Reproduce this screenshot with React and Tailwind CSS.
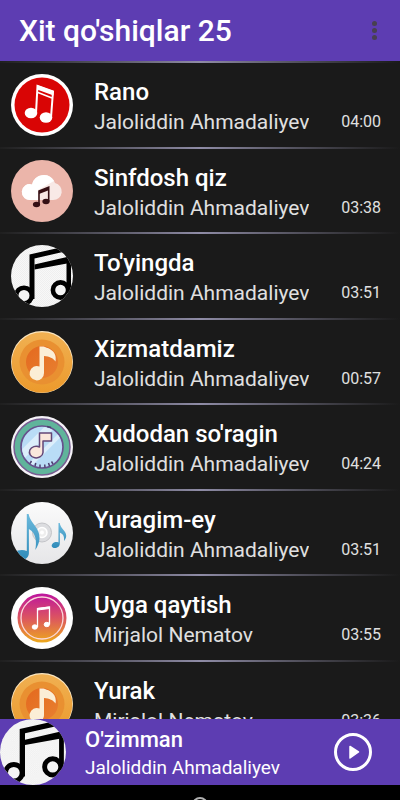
import React, { useState } from 'react';

const RedNote = () => (
    <svg viewBox="0 0 62 62" className="size-full">
        <circle cx="31" cy="31" r="31" fill="#fff" />
        <circle cx="31" cy="31" r="27.5" fill="#d90505" />
        <g fill="#fff">
            <ellipse cx="20" cy="39" rx="6.3" ry="5.2" />
            <ellipse cx="35" cy="43.5" rx="6.3" ry="5.2" />
            <path d="M25 39 26.5 12 42 17.5 40 43.5" fill="none" stroke="#fff" strokeWidth="2" />
            <path d="M26 11 42.5 17v4.5L26 15.5z" />
            <path d="M27 18.5 41 24" stroke="#fff" strokeWidth="1.6" />
        </g>
    </svg>
);

const CloudNote = () => (
    <svg viewBox="0 0 62 62" className="size-full">
        <circle cx="31" cy="31" r="31" fill="#ebb5aa" />
        <path d="M20 40a8 8 0 1 1 1-15.6 12 12 0 0 1 23-1.4 8.6 8.6 0 0 1-2 17z" fill="#f8e9e6" />
        <path d="M20 40a8 8 0 1 1 1-15.6 12 12 0 0 1 22-3.4L27 30v10z" fill="#fff" />
        <g fill="#351015">
            <ellipse cx="25.5" cy="44.5" rx="3.6" ry="2.7" />
            <ellipse cx="35" cy="41.5" rx="3.6" ry="2.7" />
            <path d="M28 44.5V31l9.7-3.8v14.3" fill="none" stroke="#351015" strokeWidth="1.6" />
            <path d="M28 31 37.7 27.2v3L28 34z" />
        </g>
    </svg>
);

const BlackNote = () => (
    <svg viewBox="0 0 62 62" className="size-full">
        <defs>
            <clipPath id="disc"><circle cx="31" cy="31" r="31" /></clipPath>
            <pattern id="checks" width="2" height="2" patternUnits="userSpaceOnUse">
                <rect width="2" height="2" fill="#f8f8f8" />
                <rect width="1" height="1" fill="#efefef" />
                <rect x="1" y="1" width="1" height="1" fill="#efefef" />
            </pattern>
        </defs>
        <g clipPath="url(#disc)">
            <rect width="62" height="62" fill="url(#checks)" />
            <path d="M18.5 54V9.5L56 1v5L23.5 13.5V54z" fill="#000" />
            <path d="M23.5 19.5 56 12v6.5L23.5 24.5z" fill="#000" />
            <path d="M55.5 8h4.5v40h-4.5z" fill="#000" />
            <circle cx="13" cy="50.5" r="7.8" fill="#f4f4f4" stroke="#000" strokeWidth="4.6" />
            <circle cx="49.5" cy="45" r="7.6" fill="#f4f4f4" stroke="#000" strokeWidth="4.6" />
        </g>
    </svg>
);

const OrangeNote = () => (
    <svg viewBox="0 0 62 62" className="size-full">
        <defs>
            <linearGradient id="amber" x1="0" y1="0" x2="0" y2="1">
                <stop offset="0" stopColor="#f0b052" />
                <stop offset="1" stopColor="#ec9a2c" />
            </linearGradient>
            <linearGradient id="rust" x1="0" y1="0" x2="1" y2="1">
                <stop offset="0" stopColor="#e4691f" />
                <stop offset="1" stopColor="#e88030" />
            </linearGradient>
        </defs>
        <circle cx="31" cy="31" r="31" fill="#fbe6c0" />
        <circle cx="31" cy="31.5" r="30.3" fill="url(#amber)" />
        <circle cx="31" cy="31" r="22.5" fill="#e99031" />
        <circle cx="31" cy="31" r="16" fill="url(#rust)" />
        <path d="M28.5 15.5h4c2 1 4 1 7 3 4 2.5 6 6 5 12-2.5-3.5-6-5-11.5-5.5V42a7.2 7.2 0 1 1-4.5-6.5z" fill="#fbeed6" />
    </svg>
);

const TealNote = () => (
    <svg viewBox="0 0 62 62" className="size-full">
        <defs>
            <clipPath id="glass"><circle cx="31" cy="31" r="20" /></clipPath>
        </defs>
        <circle cx="31" cy="31" r="31" fill="#f5f2f7" />
        <circle cx="31" cy="31" r="28" fill="#60b49b" stroke="#765c91" strokeWidth="1.5" />
        <circle cx="31" cy="31" r="21" fill="#b9dcf6" stroke="#67518d" strokeWidth="1.7" />
        <g clipPath="url(#glass)" stroke="#dceefb">
            <path d="M8 42 42 8" strokeWidth="8" />
            <path d="M18 50 52 16" strokeWidth="4" />
        </g>
        <path d="M19 47.5l1.5-2.5M24 50l.8-3M29 51.5v-3M34 51.5l-.3-3M38.5 50l-1-3M42 48l-1.5-2.5M36 10.5l4 1" stroke="#4d416f" strokeWidth="1.5" />
        <path d="M28.5 17H40.5v8H32v11.5a6.8 5.8 0 1 1-3.5-5.5z" fill="#fae7dc" stroke="#634777" strokeWidth="1.5" strokeLinejoin="round" />
    </svg>
);

const BlueNotes = () => (
    <svg viewBox="0 0 62 62" className="size-full">
        <defs>
            <clipPath id="plate"><circle cx="31" cy="31" r="31" /></clipPath>
            <linearGradient id="silver" x1="0" y1="0" x2="0" y2="1">
                <stop offset="0" stopColor="#fbfbfb" />
                <stop offset="1" stopColor="#e6e6e8" />
            </linearGradient>
            <linearGradient id="sky" x1="0" y1="0" x2="0" y2="1">
                <stop offset="0" stopColor="#6bb9dc" />
                <stop offset="1" stopColor="#2f8bb9" />
            </linearGradient>
        </defs>
        <circle cx="31" cy="31" r="31" fill="url(#silver)" />
        <circle cx="31" cy="30.5" r="9.5" fill="#dcdde0" stroke="#c3c4c8" />
        <circle cx="31" cy="30.5" r="5" fill="#eee" stroke="#fff" strokeWidth="1.5" />
        <circle cx="31" cy="30.5" r="2" fill="#fff" />
        <g fill="url(#sky)" clipPath="url(#plate)">
            <path d="M15.8 12h1.8c1 6 5 9 8.5 15 4 7 2.8 14-1.8 21 1.5-8 1-17-6.4-21v24c0 5-5 8-10 7s-6-8-1-9.5c3-.8 6-.8 8.9.5z" />
            <path d="M47.5 21h1.3c.5 4 3 5.5 5.2 9 2 3.5 1.5 6-1 9 .5-4-.5-7-4.2-8.5v11c0 3-2.500 4.500-5 4.500s-4-2-2.500-4 4-2.500 6.200-1.500z" />
        </g>
    </svg>
);

const SunsetNote = () => (
    <svg viewBox="0 0 62 62" className="size-full">
        <defs>
            <linearGradient id="sunset" x1="0" y1="0" x2="0" y2="1">
                <stop offset="0" stopColor="#bd149f" />
                <stop offset=".5" stopColor="#dc5560" />
                <stop offset="1" stopColor="#eda91c" />
            </linearGradient>
        </defs>
        <circle cx="31" cy="31" r="31" fill="#fff" />
        <circle cx="31" cy="31" r="24.5" fill="url(#sunset)" />
        <circle cx="31" cy="31" r="21" fill="none" stroke="#fbd9dc" strokeWidth="1.3" />
        <g fill="#fff" stroke="#fff">
            <path d="M26.5 40V21.5L38.5 20V37.5" fill="none" strokeWidth="1.3" />
            <path d="M26.5 21.5 38.5 20v1.5L26.5 23z" />
            <ellipse cx="23.8" cy="40" rx="2.6" ry="2.2" />
            <ellipse cx="35.8" cy="37.5" rx="2.6" ry="2.2" />
        </g>
    </svg>
);

const songs = [
    { title: 'Rano', artist: 'Jaloliddin Ahmadaliyev', time: '04:00', Cover: RedNote },
    { title: 'Sinfdosh qiz', artist: 'Jaloliddin Ahmadaliyev', time: '03:38', Cover: CloudNote },
    { title: "To'yingda", artist: 'Jaloliddin Ahmadaliyev', time: '03:51', Cover: BlackNote },
    { title: 'Xizmatdamiz', artist: 'Jaloliddin Ahmadaliyev', time: '00:57', Cover: OrangeNote },
    { title: "Xudodan so'ragin", artist: 'Jaloliddin Ahmadaliyev', time: '04:24', Cover: TealNote },
    { title: 'Yuragim-ey', artist: 'Jaloliddin Ahmadaliyev', time: '03:51', Cover: BlueNotes },
    { title: 'Uyga qaytish', artist: 'Mirjalol Nematov', time: '03:55', Cover: SunsetNote },
    { title: 'Yurak', artist: 'Mirjalol Nematov', time: '03:36', Cover: OrangeNote },
];

export default function App() {
    const [current, setCurrent] = useState({ title: "O'zimman", artist: 'Jaloliddin Ahmadaliyev', Cover: BlackNote });

    return (
        <div className="flex h-screen flex-col overflow-hidden bg-[#1a1a1a] font-['Roboto',sans-serif] text-white">

            {/* Header */}
            <header className="flex h-[61px] shrink-0 items-center justify-between bg-[#5d3db2] pr-4 pl-[19px]">
                <h1 className="text-[30px] leading-8 font-medium">Xit qo'shiqlar 25</h1>
                <button aria-label="Menu" className="flex h-8 w-5 flex-col items-center justify-center gap-[2px]">
                    <span className="size-[5px] rounded-full bg-[#484050]" />
                    <span className="size-[5px] rounded-full bg-[#484050]" />
                    <span className="size-[5px] rounded-full bg-[#484050]" />
                </button>
            </header>

            {/* Song list */}
            <ul className="min-h-0 flex-1 overflow-hidden">
                {songs.map(song => (
                    <li key={song.title} className="flex flex-col odd:h-[86px] even:h-[85px]">
                        <div className="h-[2px] shrink-0 bg-linear-to-r from-[#1f1f1f] via-[#8f8ca6] to-[#1a1a1a]" />
                        <button onClick={() => setCurrent(song)} className="flex w-full flex-1 items-center pr-[19px] pl-[11px] text-left">
                            <span className="size-[62px] shrink-0"><song.Cover /></span>
                            <span className="ml-[21px] min-w-0 flex-1 pt-1">
                                <span className="block truncate text-[24px] leading-[30px] font-medium">{song.title}</span>
                                <span className="flex items-center justify-between text-[#e0e0e0]">
                                    <span className="truncate text-[21px] leading-[30px]">{song.artist}</span>
                                    <span className="text-base leading-[30px]">{song.time}</span>
                                </span>
                            </span>
                        </button>
                    </li>
                ))}
            </ul>

            {/* Player */}
            <section className="flex h-[66px] shrink-0 items-center bg-[#5d3db2] pr-7">
                <span className="size-[66px] shrink-0"><current.Cover /></span>
                <div className="ml-[19px] min-w-0 flex-1 pt-1">
                    <p className="truncate text-[22px] leading-7 font-medium">{current.title}</p>
                    <p className="truncate text-[19px] leading-7">{current.artist}</p>
                </div>
                <button aria-label="Play" className="size-[38px] shrink-0">
                    <svg viewBox="0 0 38 38" className="size-full">
                        <circle cx="19" cy="19" r="17.5" fill="none" stroke="#fff" strokeWidth="3" />
                        <path d="M16 13.5 24.5 19 16 25z" fill="#fff" stroke="#fff" strokeWidth="1.5" strokeLinejoin="round" />
                    </svg>
                </button>
            </section>

            {/* System navigation */}
            <nav className="flex h-[15px] shrink-0 justify-center overflow-hidden bg-black pt-3">
                <button aria-label="Home" className="size-4 shrink-0 rounded-full border-2 border-[#b0b0b0]" />
            </nav>
        </div>
    );
}
